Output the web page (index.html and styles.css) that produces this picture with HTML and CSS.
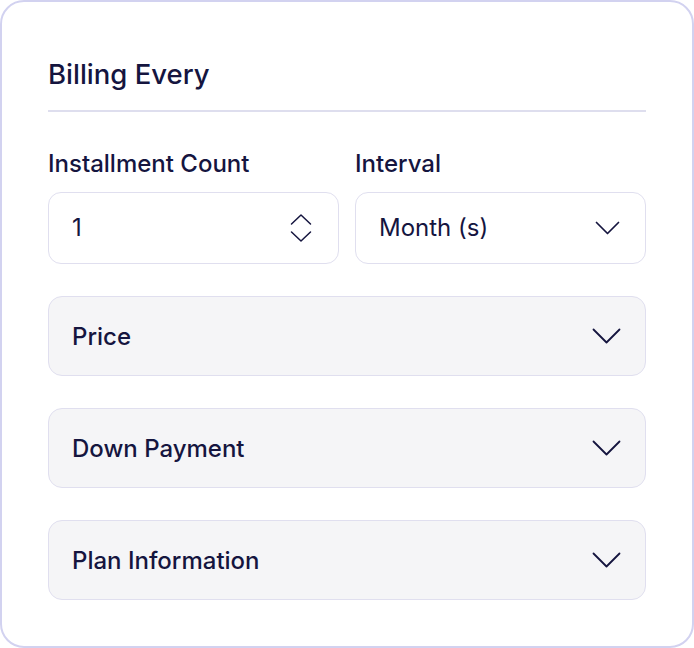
FILE: index.html
```html
<!DOCTYPE html>
<html>
<head>
<meta charset="utf-8">
<link rel="stylesheet" href="styles.css">
</head>
<body>
<div class="card">
  <h2 class="title">Billing Every</h2>
  <div class="divider"></div>
  <div class="row">
    <div class="field">
      <label class="label">Installment Count</label>
      <div class="input">
        <span>1</span>
        <svg class="stepper" width="22" height="30" viewBox="0 0 22 30" fill="none" stroke="#15153f" stroke-width="1.5" stroke-linecap="round" stroke-linejoin="round"><path d="M1.5 11 L11 2 L20.5 11"/><path d="M1.5 19 L11 28 L20.5 19"/></svg>
      </div>
    </div>
    <div class="field">
      <label class="label">Interval</label>
      <div class="input">
        <span>Month (s)</span>
        <svg class="chev" width="25" height="14" viewBox="0 0 25 14" fill="none" stroke="#15153f" stroke-width="1.7" stroke-linecap="round" stroke-linejoin="round"><path d="M1.5 1.5 L12.5 12.5 L23.5 1.5"/></svg>
      </div>
    </div>
  </div>
  <div class="accordions">
    <div class="acc"><span>Price</span><svg class="chev" width="29" height="16" viewBox="0 0 29 16" fill="none" stroke="#15153f" stroke-width="1.8" stroke-linecap="round" stroke-linejoin="round"><path d="M1.5 1.5 L14.5 14.5 L27.5 1.5"/></svg></div>
    <div class="acc"><span>Down Payment</span><svg class="chev" width="29" height="16" viewBox="0 0 29 16" fill="none" stroke="#15153f" stroke-width="1.8" stroke-linecap="round" stroke-linejoin="round"><path d="M1.5 1.5 L14.5 14.5 L27.5 1.5"/></svg></div>
    <div class="acc"><span>Plan Information</span><svg class="chev" width="29" height="16" viewBox="0 0 29 16" fill="none" stroke="#15153f" stroke-width="1.8" stroke-linecap="round" stroke-linejoin="round"><path d="M1.5 1.5 L14.5 14.5 L27.5 1.5"/></svg></div>
  </div>
</div>
</body>
</html>
```
FILE: styles.css
```css
* { box-sizing: border-box; }
html, body { margin: 0; padding: 0; background: #ffffff; }
body { font-family: Inter, "Noto Sans", sans-serif; color: #15153f; }
.card {
  width: 694px;
  height: 648px;
  border: 2px solid #d2d2f0;
  border-radius: 24px;
  padding: 54px 46px 0 46px;
  background: #fff;
}
.title {
  margin: 0;
  font-size: 27.5px;
  line-height: 36px;
  font-weight: 500;
}
.divider {
  height: 2px;
  background: #dedeee;
  margin-top: 18px;
}
.row {
  display: flex;
  gap: 16px;
  margin-top: 38px;
}
.field { flex: 1; display: flex; flex-direction: column; }
.label {
  font-size: 24px;
  line-height: 28px;
  font-weight: 500;
}
.input {
  margin-top: 14px;
  height: 72px;
  border: 1.5px solid #e0dfef;
  border-radius: 13px;
  display: flex;
  align-items: center;
  justify-content: space-between;
  padding: 0 25px 1px 23px;
  font-size: 24px;
}
.input .stepper { margin-right: 1px; }
.accordions {
  display: flex;
  flex-direction: column;
  gap: 32px;
  margin-top: 32px;
}
.acc {
  height: 80px;
  background: #f5f5f7;
  border: 1.5px solid #e0dfef;
  border-radius: 14px;
  display: flex;
  align-items: center;
  justify-content: space-between;
  padding: 0 24px 0 23px;
  font-size: 24px;
  font-weight: 500;
}
```
